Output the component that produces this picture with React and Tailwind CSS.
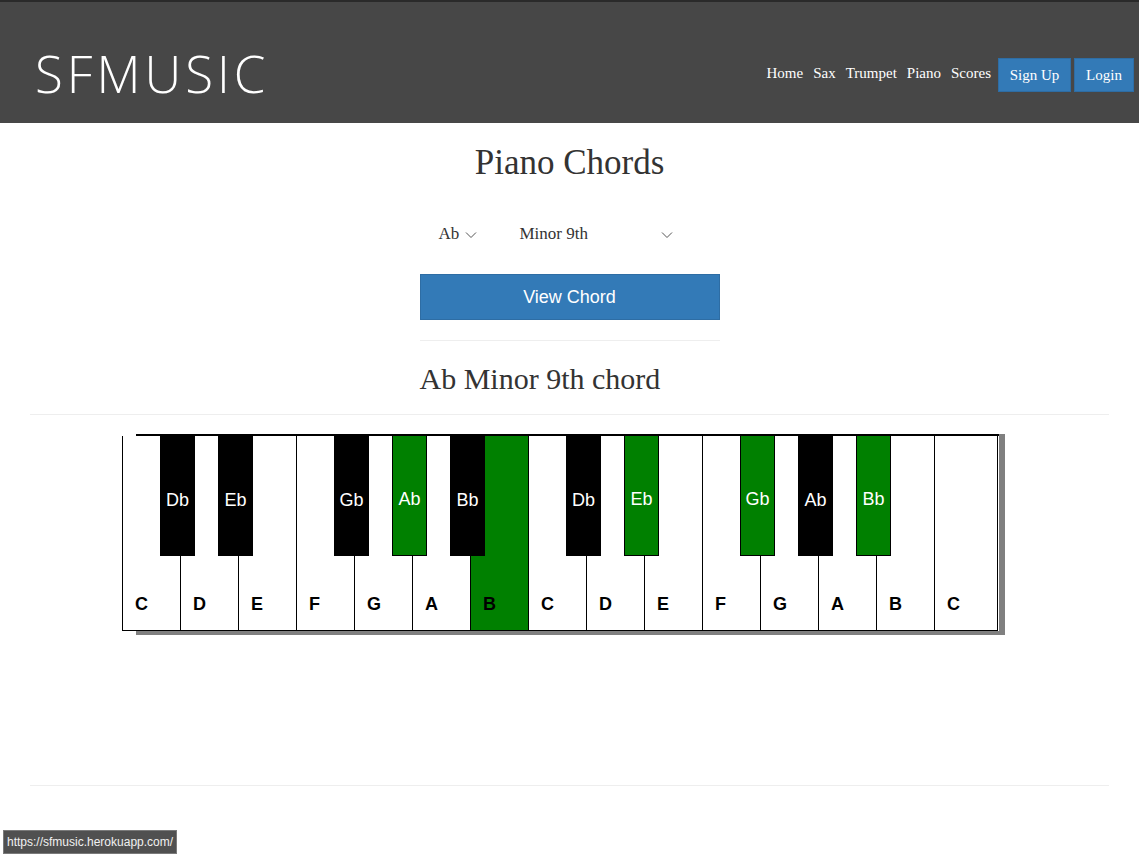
import React from "react";

const whites = ["C", "D", "E", "F", "G", "A", "B", "C", "D", "E", "F", "G", "A", "B", "C"];
const greenWhite = new Set([6]);
const blacks = [
  { i: 0, n: "Db", g: false },
  { i: 1, n: "Eb", g: false },
  { i: 3, n: "Gb", g: false },
  { i: 4, n: "Ab", g: true },
  { i: 5, n: "Bb", g: false },
  { i: 7, n: "Db", g: false },
  { i: 8, n: "Eb", g: true },
  { i: 10, n: "Gb", g: true },
  { i: 11, n: "Ab", g: false },
  { i: 12, n: "Bb", g: true },
];

function Chevron({ className }) {
  return (
    <svg className={className} width="12" height="8" viewBox="0 0 12 8" fill="none">
      <path d="M1 1.5 L6 6.5 L11 1.5" stroke="#555" strokeWidth="1" />
    </svg>
  );
}

export default function App() {
  return (
    <div className="min-h-[859px] bg-white font-['Liberation_Serif',serif] relative overflow-hidden">
      <header className="h-[123px] bg-[#474747] border-t-2 border-[#2a2a2a] flex items-center justify-between pl-[35px] pr-[5px]">
        <div className="text-white font-['Open_Sans',sans-serif] font-light text-[51px] tracking-[4px] leading-none mt-[21px]">
          SFMUSIC
        </div>
        <nav className="flex items-center mt-[21px]">
          <div className="flex items-center gap-[10px] text-white text-[15px] mr-[7px]">
            <span>Home</span>
            <span>Sax</span>
            <span>Trumpet</span>
            <span>Piano</span>
            <span>Scores</span>
          </div>
          <button className="bg-[#337ab7] border border-[#2e6da4] text-white text-[15px] w-[73px] h-[34px] mt-[4px]">
            Sign Up
          </button>
          <button className="bg-[#337ab7] border border-[#2e6da4] text-white text-[15px] w-[60px] h-[34px] ml-[3px] mt-[4px]">
            Login
          </button>
        </nav>
      </header>

      <main className="mx-[30px]">
        <div className="w-[300px] mx-auto flex flex-col items-center">
          <h1 className="text-[35px] text-[#333] mt-[18px] leading-[44px]">Piano Chords</h1>
          <div className="flex items-center mt-[37px] h-[24px] text-[17px] text-[#333] w-full">
            <div className="flex items-center ml-[19px] w-[60px]">
              <span>Ab</span>
              <Chevron className="ml-[6px] mt-[1px]" />
            </div>
            <div className="flex items-center ml-[21px] w-[153px] justify-between">
              <span>Minor 9th</span>
              <Chevron className="mt-[1px]" />
            </div>
          </div>
          <button className="mt-[28px] w-[300px] h-[46px] bg-[#337ab7] border border-[#2e6da4] text-white font-['Liberation_Sans',sans-serif] text-[18px]">
            View Chord
          </button>
          <div className="w-full border-t border-[#eee] mt-[20px]" />
          <h2 className="self-start text-[30px] text-[#333] mt-[20px] leading-[36px]">Ab Minor 9th chord</h2>
        </div>
        <div className="border-t border-[#eee] mt-[17px]" />

        <div className="mt-[19px] ml-[106px] w-[863px] h-[197px] border-t-2 border-black shadow-[6px_0_0_#808080,0_4px_0_#808080,6px_4px_0_#808080] relative">
          <div className="flex ml-[-14px] font-['Liberation_Sans',sans-serif]">
            {whites.map((n, i) => (
              <div
                key={i}
                className={`h-[195px] border-l border-b border-black flex items-end pb-[12px] pl-[12px] text-[18px] font-bold text-black ${
                  greenWhite.has(i) ? "bg-[#008000]" : "bg-white"
                } ${i === whites.length - 1 ? "w-[64px] border-r" : "w-[58px]"}`}
              >
                {n}
              </div>
            ))}
          </div>
          {blacks.map((b, k) => (
            <div
              key={k}
              className={`absolute top-0 w-[35px] h-[120px] flex items-center justify-center pt-[8px] text-white text-[18px] font-['Liberation_Sans',sans-serif] ${
                b.g ? "bg-[#008000] border border-black border-t-0" : "bg-black"
              }`}
              style={{ left: 24 + b.i * 58 }}
            >
              {b.n}
            </div>
          ))}
        </div>

        <div className="border-t border-[#eee] mt-[154px]" />
      </main>

      <div className="absolute left-[3px] top-[830px] h-[24px] px-[3px] bg-[#505050] border border-[#7a7a7a] flex items-center text-[#f0f0f0] text-[12px] font-['Liberation_Sans',sans-serif]">
        https://sfmusic.herokuapp.com/
      </div>
    </div>
  );
}
